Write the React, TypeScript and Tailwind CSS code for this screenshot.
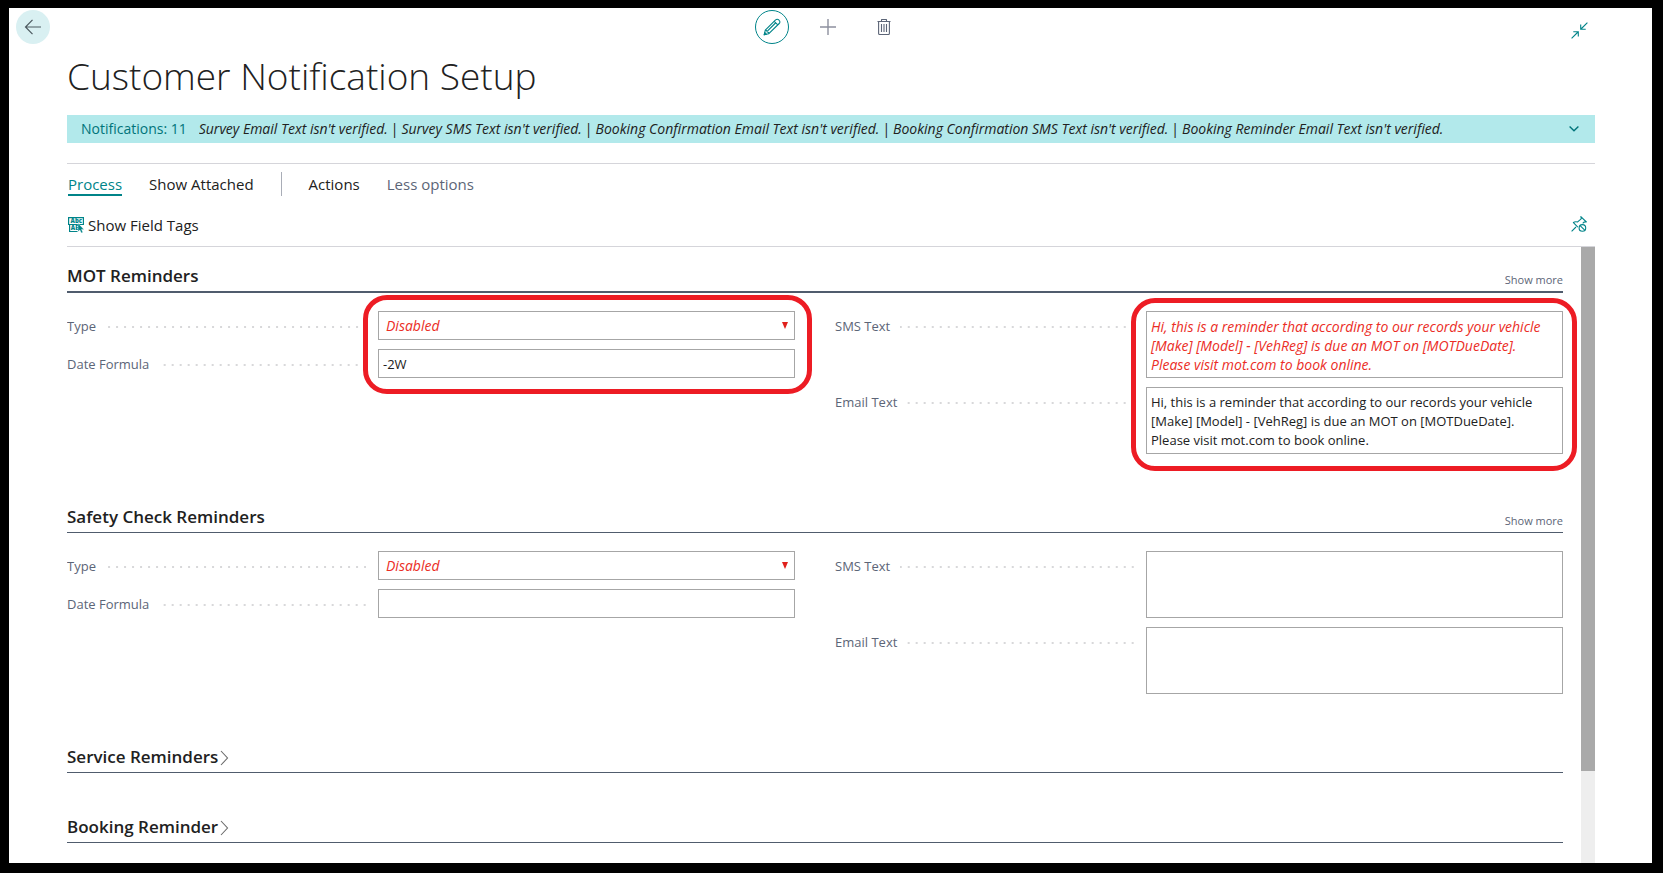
import React, { useState } from "react";

const notifications = [
  "Survey Email Text isn't verified.",
  "Survey SMS Text isn't verified.",
  "Booking Confirmation Email Text isn't verified.",
  "Booking Confirmation SMS Text isn't verified.",
  "Booking Reminder Email Text isn't verified.",
];

const reminder =
  "Hi, this is a reminder that according to our records your vehicle [Make] [Model] - [VehReg] is due an MOT on [MOTDueDate]. Please visit mot.com to book online.";

function BackIcon() {
  return (
    <svg width="18" height="18" viewBox="0 0 18 18" fill="none" stroke="#4d5a60" strokeWidth="1.2" aria-hidden="true">
      <path d="M17 9H1.5M8.5 1.8 1.5 9l7 7.2" />
    </svg>
  );
}

function PencilIcon() {
  return (
    <svg width="18" height="18" viewBox="0 0 18 18" fill="none" stroke="#008489" strokeWidth="1.1" strokeLinejoin="round" aria-hidden="true">
      <path d="M1.2 16.8 2.3 12.2 12.6 1.9a2.2 2.2 0 0 1 3.2 0l.4.4a2.2 2.2 0 0 1 0 3.2L5.8 15.7Z" />
      <path d="M2.3 12.2c1.2 0 1.9.5 1.9 1.8 1.1 0 1.6.6 1.6 1.7M11.2 3.3l3.6 3.6M12.5 5 4.6 12.9" />
      <path d="M1.2 16.8l.6-2.2 1.6 1.6Z" fill="#008489" />
    </svg>
  );
}

function PlusIcon() {
  return (
    <svg width="16" height="16" viewBox="0 0 16 16" fill="none" stroke="#8d909e" strokeWidth="1.4" aria-hidden="true">
      <path d="M8 0v16M0 8h16" />
    </svg>
  );
}

function TrashIcon() {
  return (
    <svg width="14" height="16" viewBox="0 0 14 16" fill="none" stroke="#5c6577" strokeWidth="1.1" aria-hidden="true">
      <path d="M.5 2.5h13M4.5 2.5V.9q0-.4.4-.4h4.2q.4 0 .4.4v1.6M1.6 2.5v12q0 1 1 1h8.8q1 0 1-1v-12" />
      <path d="M4.5 5v8M7 5v8M9.5 5v8" />
    </svg>
  );
}

function CollapseIcon() {
  return (
    <svg width="17" height="17" viewBox="0 0 17 17" fill="none" stroke="#008489" strokeWidth="1.1" aria-hidden="true">
      <path d="M16.4.6 10 7M9.7 2.6v4.7h5M.6 16.4 7 10M2.3 9.7h5v4.7" />
    </svg>
  );
}

function FieldTagsIcon() {
  return (
    <svg width="16" height="16" viewBox="0 0 16 16" aria-hidden="true">
      <path d="M.6.6h14.8v6.9H.6ZM1.6 7.5v7h8" fill="none" stroke="#008489" strokeWidth="1.2" />
      <text x="2.6" y="6.2" fontSize="6" fontWeight="800" fontFamily="Open Sans, sans-serif" fill="#008489">Abc</text>
      <text x="2.8" y="13.4" fontSize="6" fontWeight="800" fontFamily="Open Sans, sans-serif" fill="#008489">AE</text>
      <path d="M10 6.2v8.4l1.9-1.6 1.4 3 1.6-.8-1.4-2.8H16Z" fill="#008489" stroke="#fff" strokeWidth=".4" />
    </svg>
  );
}

function UnpinIcon() {
  return (
    <svg width="16" height="16" viewBox="0 0 16 16" fill="none" stroke="#008489" strokeWidth="1.1" aria-hidden="true">
      <path d="M.6 15.4 5 11M2.2 6.4l4.6 4.7M2 6.6c1.6-1 3.2-1 4.6-.6L10.2 2.8 10 .8l5.2 5-2.1.3-1.4 1.3" />
      <circle cx="11.4" cy="11.9" r="3.3" />
      <path d="m9.1 9.6 4.6 4.6" />
    </svg>
  );
}

function Highlight({ className }: { className: string }) {
  return (
    <div
      aria-hidden="true"
      className={`pointer-events-none absolute left-[296px] rounded-[24px] border-[5px] border-[#ed1c24] ${className}`}
    />
  );
}

function Field({ id, label, children }: { id: string; label: string; children: React.ReactNode }) {
  return (
    <div className="grid grid-cols-[311px_1fr] items-start">
      <div className="flex h-[29px] items-start pr-3">
        <label htmlFor={id} className="pt-px leading-[29px] text-[#5c6577]">
          {label}
        </label>
        <span
          aria-hidden="true"
          className="mt-[15px] ml-2.5 h-0.5 flex-1 bg-[linear-gradient(to_left,#d8d8da_2px,transparent_2px)] bg-[length:8px_2px] bg-right bg-repeat-x"
        />
      </div>
      {children}
    </div>
  );
}

function TypeSelect({ id }: { id: string }) {
  return (
    <div className="relative">
      <select
        id={id}
        defaultValue="Disabled"
        className="block h-[29px] w-full appearance-none border border-[#a6a6a6] bg-white px-[7px] pt-px text-sm text-[#eb2d26] italic"
      >
        <option>Disabled</option>
        <option>Enabled</option>
      </select>
      <svg width="6" height="7" viewBox="0 0 6 7" className="pointer-events-none absolute top-[11px] right-[7px]" aria-hidden="true">
        <path d="M0 0h6L3 7Z" fill="#e0201b" />
      </svg>
    </div>
  );
}

function SectionHeader({ title, strong }: { title: string; strong?: boolean }) {
  return (
    <div className={`flex items-end justify-between border-[#505c6d] pt-[17px] pb-[3px] ${strong ? "border-b-2" : "border-b"}`}>
      <h2 className="text-[17px] leading-6 font-semibold text-[#212121]">{title}</h2>
      <button type="button" className="text-[11px] leading-4 text-[#5c6577]">
        Show more
      </button>
    </div>
  );
}

interface ReminderProps {
  id: string;
  title: string;
  formula: string;
  sms: string;
  email: string;
  marked?: boolean;
}

function ReminderSection({ id, title, formula, sms, email, marked }: ReminderProps) {
  const area =
    "block h-[67px] w-full resize-none overflow-hidden border border-[#a6a6a6] bg-white pt-[5px] pr-5 pb-[3px] pl-1 leading-[19px]";
  return (
    <section>
      <SectionHeader title={title} strong={marked} />
      <div className="grid grid-cols-2 items-start gap-10 pt-[18px] pb-[34px]">
        <div className="relative flex flex-col gap-[9px]">
          <Field id={`${id}-type`} label="Type">
            <TypeSelect id={`${id}-type`} />
          </Field>
          <Field id={`${id}-formula`} label="Date Formula">
            <input
              id={`${id}-formula`}
              type="text"
              defaultValue={formula}
              className="block h-[29px] w-full border border-[#a6a6a6] bg-white px-1 text-[#212121]"
            />
          </Field>
          {marked && <Highlight className="-top-4 -right-[17px] -bottom-4" />}
        </div>
        <div className="relative flex flex-col gap-[9px]">
          <Field id={`${id}-sms`} label="SMS Text">
            <textarea id={`${id}-sms`} defaultValue={sms} className={`${area} text-sm/[19px] text-[#eb2d26] italic`} />
          </Field>
          <Field id={`${id}-email`} label="Email Text">
            <textarea id={`${id}-email`} defaultValue={email} className={`${area} text-[#212121]`} />
          </Field>
          {marked && <Highlight className="-top-[13px] -right-[14px] -bottom-[17px]" />}
        </div>
      </div>
    </section>
  );
}

function CollapsedSection({ title }: { title: string }) {
  return (
    <section className="mb-[25px] border-b border-[#505c6d] pt-[17px] pb-[3px]">
      <h2 className="text-[17px] leading-6 font-semibold text-[#212121]">
        <button type="button" aria-expanded="false" className="flex items-center gap-0.5">
          {title}
          <svg width="9" height="18" viewBox="0 0 9 18" fill="none" stroke="#6b6b6b" strokeWidth="1.1" aria-hidden="true">
            <path d="M1 3 7.5 10 1 17" />
          </svg>
        </button>
      </h2>
    </section>
  );
}

export default function App() {
  const [editing, setEditing] = useState(true);
  return (
    <div className="h-screen bg-white pb-px font-['Open_Sans',sans-serif] text-[13px] text-[#212121]">
      <div className="flex h-full flex-col overflow-hidden border-t-8 border-r-11 border-b-10 border-l-9 border-black bg-white">
        <header className="grid grid-cols-[1fr_auto_1fr] items-center pt-0.5 pr-[13px] pl-[7px]">
          <button type="button" aria-label="Back" className="flex size-[34px] items-center justify-center rounded-full bg-[#d9f0f2]">
            <BackIcon />
          </button>
          <div className="flex gap-[22px]">
            <button
              type="button"
              aria-label="Edit"
              aria-pressed={editing}
              onClick={() => setEditing(!editing)}
              className="flex size-[34px] items-center justify-center rounded-full border border-[#008489]"
            >
              <PencilIcon />
            </button>
            <button type="button" aria-label="New" className="flex size-[34px] items-center justify-center">
              <PlusIcon />
            </button>
            <button type="button" aria-label="Delete" className="flex size-[34px] items-center justify-center">
              <TrashIcon />
            </button>
          </div>
          <button type="button" aria-label="Collapse" className="mr-[51px] self-end justify-self-end pb-[5px]">
            <CollapseIcon />
          </button>
        </header>

        <main className="flex min-h-0 flex-1 flex-col pr-[57px] pl-[58px]">
          <h1 className="mt-2 mb-[15px] text-[37px] leading-[48px] font-light">Customer Notification Setup</h1>

          <div className="flex h-7 shrink-0 items-center bg-[#b2e9eb] pr-4 pl-[14px]">
            <span className="mr-3 text-sm text-[#00747a]">Notifications: 11</span>
            <ul className="flex flex-1 overflow-hidden text-sm whitespace-nowrap italic">
              {notifications.map((n, i) => (
                <li key={n} className="flex">
                  {i > 0 && <span className="mx-[3px] not-italic">|</span>}
                  {n}
                </li>
              ))}
            </ul>
            <button type="button" aria-label="Expand notifications">
              <svg width="10" height="6" viewBox="0 0 10 6" fill="none" stroke="#00747a" strokeWidth="1.4" aria-hidden="true">
                <path d="m.6.6 4.4 4.2L9.4.6" />
              </svg>
            </button>
          </div>

          <nav className="mt-5 flex items-start gap-[27px] border-t border-[#d5d5da] pt-2 pl-px text-[15px] leading-5">
            <a href="#process" className="mt-0.5 border-b-2 border-[#008489] text-[#008489]">
              Process
            </a>
            <a href="#attached" className="mt-0.5">
              Show Attached
            </a>
            <span aria-hidden="true" className="h-6 w-px bg-[#a9adb7]" />
            <a href="#actions" className="mt-0.5">
              Actions
            </a>
            <a href="#less" className="mt-0.5 text-[#5c6577]">
              Less options
            </a>
          </nav>

          <div className="mt-[17px] flex items-start justify-between border-b border-[#d5d5da] pr-2 pb-[9px] pl-px">
            <button type="button" className="flex items-center gap-1 text-[15px] leading-6">
              <FieldTagsIcon />
              Show Field Tags
            </button>
            <button type="button" aria-label="Unpin actions" className="pt-[3px]">
              <UnpinIcon />
            </button>
          </div>

          <div className="flex min-h-0 flex-1">
            <div className="min-w-0 flex-1 overflow-hidden pr-[18px]">
              <ReminderSection id="mot" title="MOT Reminders" formula="-2W" sms={reminder} email={reminder} marked />
              <ReminderSection id="safety" title="Safety Check Reminders" formula="" sms="" email="" />
              <CollapsedSection title="Service Reminders" />
              <CollapsedSection title="Booking Reminder" />
            </div>
            <div aria-hidden="true" className="w-[14px] bg-[#eeeeee]">
              <div className="h-[85%] bg-[#a9a9a9]" />
            </div>
          </div>
        </main>
      </div>
    </div>
  );
}
